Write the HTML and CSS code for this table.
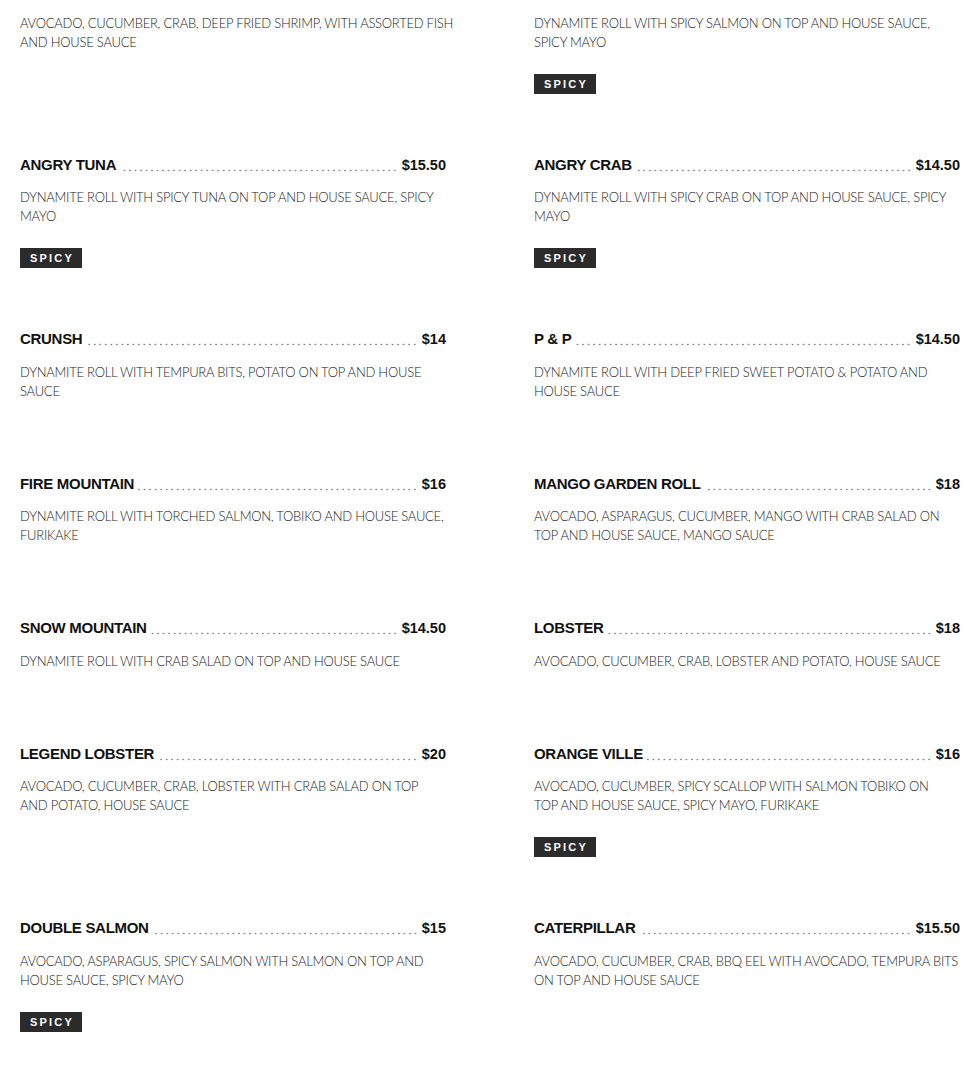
FILE: index.html
```html
<!DOCTYPE html>
<html lang="en">
<head>
<meta charset="utf-8">
<title>Menu</title>
<link rel="stylesheet" href="styles.css">
</head>
<body>
<div class="menu">
  <div class="item">
    <div class="head"><span class="name">SPECIAL SEAFOOD ROLL</span><span class="leader"></span><span class="price">$16.50</span></div>
    <p class="desc">AVOCADO, CUCUMBER, CRAB, DEEP FRIED SHRIMP, WITH ASSORTED FISH<br>AND HOUSE SAUCE</p>
  </div>
  <div class="item">
    <div class="head"><span class="name">ANGRY SALMON ROLL</span><span class="leader"></span><span class="price">$15.50</span></div>
    <p class="desc">DYNAMITE ROLL WITH SPICY SALMON ON TOP AND HOUSE SAUCE,<br>SPICY MAYO</p>
    <span class="badge">SPICY</span>
  </div>

  <div class="item">
    <div class="head"><span class="name">ANGRY TUNA</span><span class="leader"></span><span class="price">$15.50</span></div>
    <p class="desc">DYNAMITE ROLL WITH SPICY TUNA ON TOP AND HOUSE SAUCE, SPICY<br>MAYO</p>
    <span class="badge">SPICY</span>
  </div>
  <div class="item">
    <div class="head"><span class="name">ANGRY CRAB</span><span class="leader"></span><span class="price">$14.50</span></div>
    <p class="desc">DYNAMITE ROLL WITH SPICY CRAB ON TOP AND HOUSE SAUCE, SPICY<br>MAYO</p>
    <span class="badge">SPICY</span>
  </div>

  <div class="item">
    <div class="head"><span class="name">CRUNSH</span><span class="leader"></span><span class="price">$14</span></div>
    <p class="desc">DYNAMITE ROLL WITH TEMPURA BITS, POTATO ON TOP AND HOUSE<br>SAUCE</p>
  </div>
  <div class="item">
    <div class="head"><span class="name">P &amp; P</span><span class="leader"></span><span class="price">$14.50</span></div>
    <p class="desc">DYNAMITE ROLL WITH DEEP FRIED SWEET POTATO &amp; POTATO AND<br>HOUSE SAUCE</p>
  </div>

  <div class="item">
    <div class="head"><span class="name">FIRE MOUNTAIN</span><span class="leader"></span><span class="price">$16</span></div>
    <p class="desc">DYNAMITE ROLL WITH TORCHED SALMON, TOBIKO AND HOUSE SAUCE,<br>FURIKAKE</p>
  </div>
  <div class="item">
    <div class="head"><span class="name">MANGO GARDEN ROLL</span><span class="leader"></span><span class="price">$18</span></div>
    <p class="desc">AVOCADO, ASPARAGUS, CUCUMBER, MANGO WITH CRAB SALAD ON<br>TOP AND HOUSE SAUCE, MANGO SAUCE</p>
  </div>

  <div class="item">
    <div class="head"><span class="name">SNOW MOUNTAIN</span><span class="leader"></span><span class="price">$14.50</span></div>
    <p class="desc">DYNAMITE ROLL WITH CRAB SALAD ON TOP AND HOUSE SAUCE</p>
  </div>
  <div class="item">
    <div class="head"><span class="name">LOBSTER</span><span class="leader"></span><span class="price">$18</span></div>
    <p class="desc">AVOCADO, CUCUMBER, CRAB, LOBSTER AND POTATO, HOUSE SAUCE</p>
  </div>

  <div class="item">
    <div class="head"><span class="name">LEGEND LOBSTER</span><span class="leader"></span><span class="price">$20</span></div>
    <p class="desc">AVOCADO, CUCUMBER, CRAB, LOBSTER WITH CRAB SALAD ON TOP<br>AND POTATO, HOUSE SAUCE</p>
  </div>
  <div class="item">
    <div class="head"><span class="name">ORANGE VILLE</span><span class="leader"></span><span class="price">$16</span></div>
    <p class="desc">AVOCADO, CUCUMBER, SPICY SCALLOP WITH SALMON TOBIKO ON<br>TOP AND HOUSE SAUCE, SPICY MAYO, FURIKAKE</p>
    <span class="badge">SPICY</span>
  </div>

  <div class="item">
    <div class="head"><span class="name">DOUBLE SALMON</span><span class="leader"></span><span class="price">$15</span></div>
    <p class="desc">AVOCADO, ASPARAGUS, SPICY SALMON WITH SALMON ON TOP AND<br>HOUSE SAUCE, SPICY MAYO</p>
    <span class="badge">SPICY</span>
  </div>
  <div class="item">
    <div class="head"><span class="name">CATERPILLAR</span><span class="leader"></span><span class="price">$15.50</span></div>
    <p class="desc">AVOCADO, CUCUMBER, CRAB, BBQ EEL WITH AVOCADO, TEMPURA BITS<br>ON TOP AND HOUSE SAUCE</p>
  </div>
</div>
</body>
</html>
```

FILE: styles.css
```css
html, body {
  margin: 0;
  padding: 0;
  background: #ffffff;
}

body {
  font-family: "Liberation Sans", Arial, sans-serif;
  color: #111;
  overflow: hidden;
}

.menu {
  display: grid;
  grid-template-columns: 1fr 1fr;
  column-gap: 88px;
  padding: 0 6px 0 20px;
  margin-top: -21px;
}

.item {
  display: flex;
  flex-direction: column;
  align-items: flex-start;
  padding-bottom: 60px;
  min-width: 0;
}

.head {
  display: flex;
  align-items: baseline;
  width: 100%;
  height: 22px;
  line-height: 22px;
  margin-bottom: 12.5px;
}

.name {
  font-size: 15px;
  font-weight: 700;
  letter-spacing: -0.3px;
  color: #111;
  white-space: nowrap;
  margin-right: 4px;
}

.leader {
  flex: 1;
  align-self: stretch;
  background-image: radial-gradient(circle, #888 0.75px, transparent 1.15px);
  background-size: 5.53px 3px;
  background-repeat: repeat-x;
  background-position: right 0 top 15px;
}

.price {
  font-size: 14.5px;
  font-weight: 700;
  color: #111;
  margin-left: 4px;
  white-space: nowrap;
}

.desc {
  margin: 0 -16px 12px 0;
  font-family: "Lato", "Liberation Sans", sans-serif;
  font-weight: 300;
  font-size: 13px;
  letter-spacing: -0.25px;
  line-height: 19px;
  color: #1a1a1a;
  white-space: nowrap;
}

.badge {
  display: inline-block;
  margin-top: 10px;
  height: 20px;
  line-height: 20px;
  width: 62px;
  text-align: center;
  background: #2b2b2b;
  color: #fff;
  font-family: "Liberation Sans", Arial, sans-serif;
  font-weight: 700;
  font-size: 11px;
  letter-spacing: 2.2px;
  text-indent: 2px;
}
```
